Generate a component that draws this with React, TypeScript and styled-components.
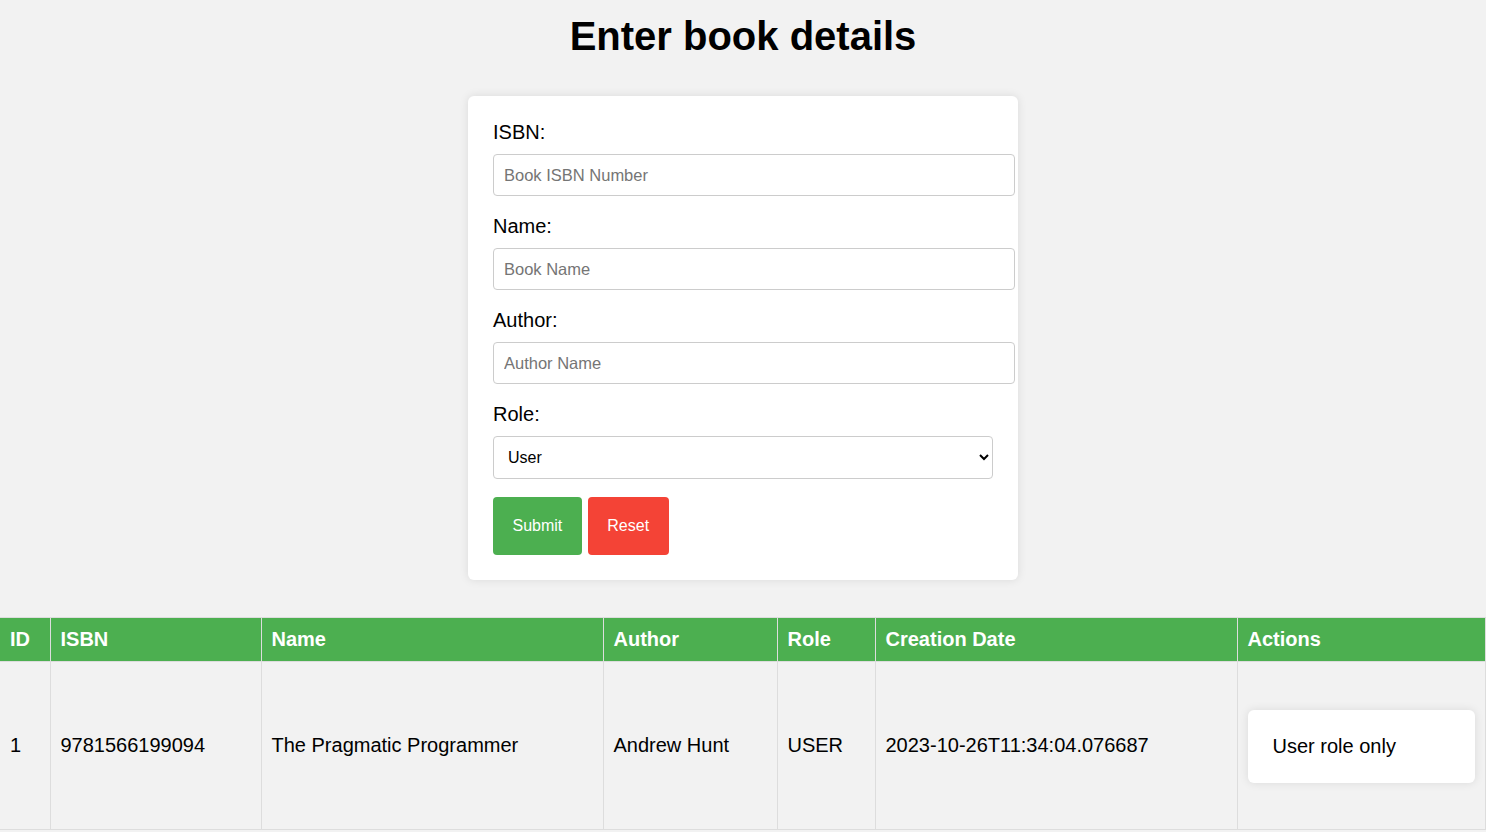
import React from "react";
import styled, { createGlobalStyle } from "styled-components";

const GlobalStyle = createGlobalStyle`
  html, body {
    margin: 0;
    padding: 0;
    background: #f2f2f2;
    font-family: "Liberation Sans", Arial, sans-serif;
    color: #000;
  }
  * { box-sizing: border-box; }
`;

const Page = styled.div`
  display: flex;
  flex-direction: column;
  align-items: stretch;
`;

const Title = styled.h1`
  margin: 13px 0 37px;
  font-size: 40px;
  font-weight: 700;
  line-height: 46px;
  text-align: center;
`;

const Card = styled.form`
  width: 550px;
  margin: 0 auto 37px;
  padding: 25px;
  background: #fff;
  border-radius: 6px;
  box-shadow: 0 0 10px rgba(0, 0, 0, 0.1);
  display: flex;
  flex-direction: column;
`;

const Label = styled.label`
  display: block;
  font-size: 20px;
  line-height: 23px;
  margin-bottom: 10px;
`;

const TextInput = styled.input`
  width: calc(100% + 22px);
  height: 42px;
  padding: 0 10px;
  margin: 0 0 19px;
  border: 1px solid #ccc;
  border-radius: 4px;
  font-family: "Liberation Sans", Arial, sans-serif;
  font-size: 16.5px;
  color: #000;
  background: #fff;
  &::placeholder {
    color: #757575;
  }
`;

const Select = styled.select`
  width: 100%;
  height: 43px;
  padding: 0 10px;
  margin: 0 0 18px;
  border: 1px solid #ccc;
  border-radius: 4px;
  font-family: "Liberation Sans", Arial, sans-serif;
  font-size: 16px;
  color: #000;
  background: #fff;
`;

const Buttons = styled.div`
  display: flex;
  gap: 6px;
`;

const Button = styled.button<{ $tone: "green" | "red" }>`
  padding: 0 19.5px;
  height: 58px;
  border: none;
  border-radius: 4px;
  font-family: "Liberation Sans", Arial, sans-serif;
  font-size: 16px;
  color: #fff;
  cursor: pointer;
  background: ${(p) => (p.$tone === "green" ? "#4caf50" : "#f44336")};
`;

const Table = styled.table`
  width: 100%;
  border-collapse: collapse;
  table-layout: fixed;
  font-size: 20px;
`;

const Th = styled.th<{ $w?: number }>`
  width: ${(p) => (p.$w ? `${p.$w}px` : "auto")};
  background: #4caf50;
  color: #fff;
  font-weight: 700;
  text-align: left;
  padding: 10px;
  line-height: 23px;
  border: 1px solid #ddd;
  &:first-child {
    border-left: none;
  }
`;

const Td = styled.td`
  padding: 10px;
  line-height: 23px;
  border: 1px solid #ddd;
  text-align: left;
  vertical-align: middle;
  &:first-child {
    border-left: none;
  }
`;

const NoteCard = styled.div`
  margin: 38px 0 36px;
  padding: 25px;
  background: #fff;
  border-radius: 6px;
  box-shadow: 0 0 10px rgba(0, 0, 0, 0.1);
`;

const columns: { label: string; w?: number }[] = [
  { label: "ID", w: 50 },
  { label: "ISBN", w: 211 },
  { label: "Name", w: 342 },
  { label: "Author", w: 174 },
  { label: "Role", w: 98 },
  { label: "Creation Date", w: 362 },
  { label: "Actions" },
];

export default function App() {
  return (
    <Page>
      <GlobalStyle />
      <Title>Enter book details</Title>
      <Card onSubmit={(e) => e.preventDefault()}>
        <Label htmlFor="isbn">ISBN:</Label>
        <TextInput id="isbn" placeholder="Book ISBN Number" />
        <Label htmlFor="name">Name:</Label>
        <TextInput id="name" placeholder="Book Name" />
        <Label htmlFor="author">Author:</Label>
        <TextInput id="author" placeholder="Author Name" />
        <Label htmlFor="role">Role:</Label>
        <Select id="role" defaultValue="USER">
          <option value="USER">User</option>
          <option value="ADMIN">Admin</option>
        </Select>
        <Buttons>
          <Button type="submit" $tone="green">Submit</Button>
          <Button type="reset" $tone="red">Reset</Button>
        </Buttons>
      </Card>
      <Table>
        <thead>
          <tr>
            {columns.map((c) => (
              <Th key={c.label} $w={c.w}>
                {c.label}
              </Th>
            ))}
          </tr>
        </thead>
        <tbody>
          <tr>
            <Td>1</Td>
            <Td>9781566199094</Td>
            <Td>The Pragmatic Programmer</Td>
            <Td>Andrew Hunt</Td>
            <Td>USER</Td>
            <Td>2023-10-26T11:34:04.076687</Td>
            <Td>
              <NoteCard>User role only</NoteCard>
            </Td>
          </tr>
        </tbody>
      </Table>
    </Page>
  );
}
